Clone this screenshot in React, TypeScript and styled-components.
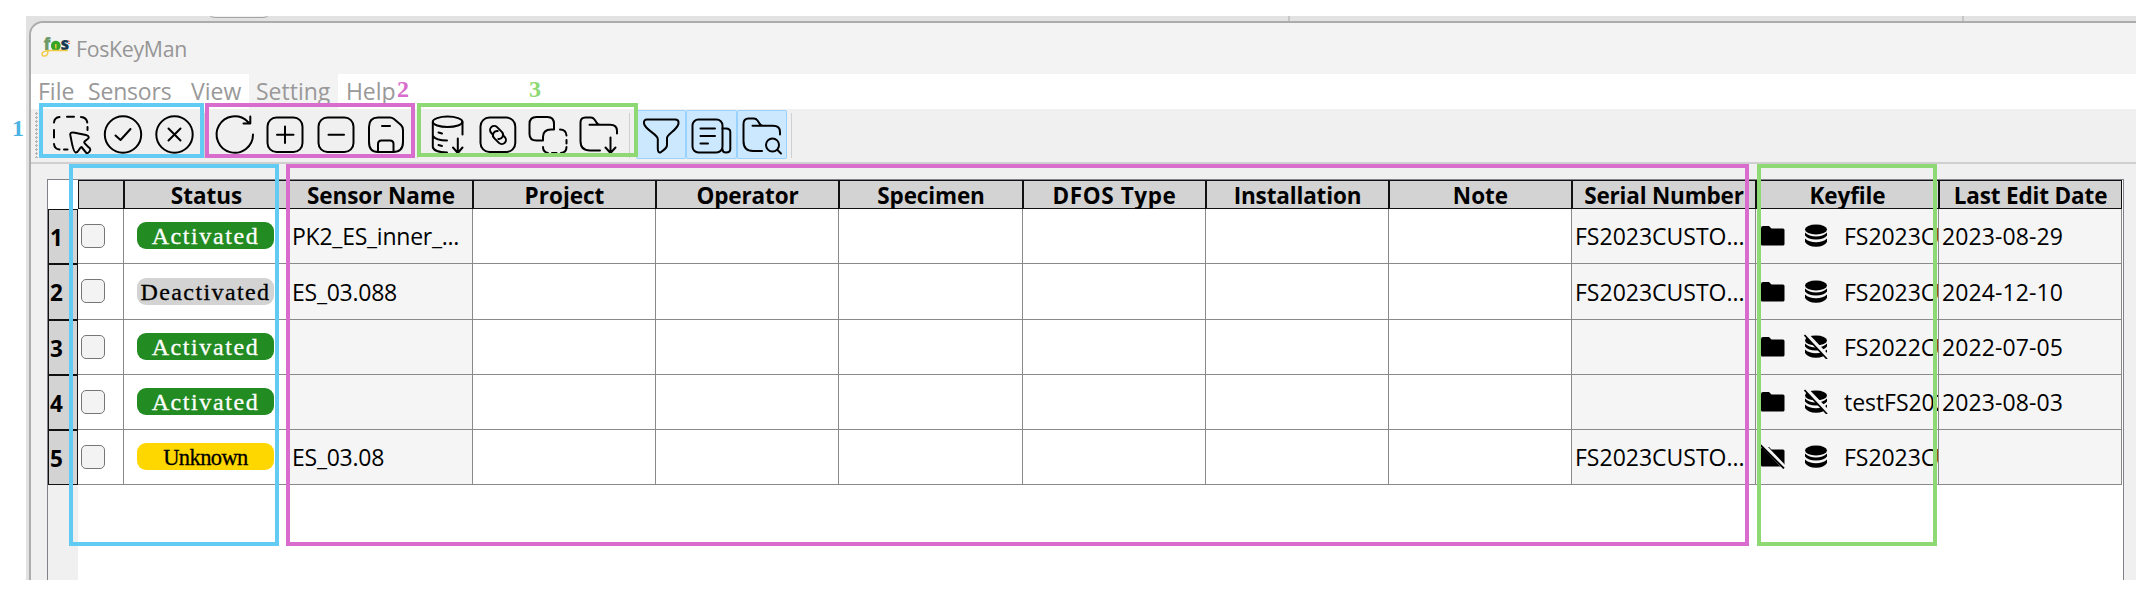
import React from "react";
import styled, { createGlobalStyle, css } from "styled-components";

const UI_FONT = '"Open Sans", "Noto Sans", sans-serif';

const GlobalStyle = createGlobalStyle`
  * { box-sizing: border-box; }
  body { margin: 0; background: #fff; font-family: ${UI_FONT}; }
`;

const Stage = styled.div`
  position: relative;
  width: 2156px;
  height: 598px;
  padding: 16px 20px 18px 26px;
  background: #fff;
  overflow: hidden;
`;

const Desktop = styled.div`
  position: relative;
  height: 564px;
  padding: 5px 0 0 3px;
  background: #e2e2e2;
  overflow: hidden;
`;

const BackdropTick = styled.i<{ $x: number }>`
  position: absolute;
  top: 0;
  left: ${(p) => p.$x}px;
  width: 2px;
  height: 6px;
  background: #c6c6c6;
`;

const BackdropPill = styled.i`
  position: absolute;
  top: -16px;
  left: 180px;
  width: 66px;
  height: 18px;
  border: 1px solid #a5a5a5;
  border-radius: 10px;
  background: #f0f0f0;
`;

const Window = styled.div`
  position: relative;
  display: flex;
  flex-direction: column;
  height: 559px;
  border: solid #acacac;
  border-width: 2px 0 0 2px;
  border-top-left-radius: 14px;
  background: #f0f0f0;
  overflow: hidden;
  > * { flex-shrink: 0; }
`;

const TitleBar = styled.header`
  display: flex;
  align-items: center;
  height: 51px;
  padding: 0 0 1px 10px;
  background: #f3f3f3;
`;

const AppTitle = styled.span`
  margin-left: 5px;
  padding-top: 1px;
  font-size: 21.3px;
  line-height: 30px;
  letter-spacing: -0.3px;
  color: #969696;
`;

const MenuBar = styled.nav`
  display: flex;
  height: 35px;
  background: #fff;
`;

const MenuItem = styled.span<{ $w: number; $pad: number; $ls?: number; $hot?: boolean }>`
  width: ${(p) => p.$w}px;
  padding-left: ${(p) => p.$pad}px;
  font-size: 23px;
  line-height: 34px;
  letter-spacing: ${(p) => p.$ls ?? 0}px;
  white-space: nowrap;
  color: #999;
  background: ${(p) => (p.$hot ? "#f3f3f3" : "transparent")};
`;

const ToolBar = styled.div`
  display: flex;
  align-items: flex-start;
  height: 55px;
  padding: 1px 0 0 4px;
  border-bottom: 2px solid #cfcfcf;
`;

const Grip = styled.div`
  width: 3px;
  height: 46px;
  margin: 2px 9px 0 0;
  background: radial-gradient(circle at 1.5px 1.5px, #b5b5b5 1.2px, transparent 1.4px) 0 0 / 3px 4px;
`;

const ToolGroup = styled.div<{ $pitch: number }>`
  display: flex;
  > * { width: ${(p) => p.$pitch}px; }
`;

const ToolButton = styled.button<{ $on?: boolean }>`
  display: block;
  height: 49px;
  padding: 0;
  border: 0;
  background: none;
  ${(p) =>
    p.$on &&
    css`
      background: #cce8ff;
      box-shadow: inset 0 0 0 1px #99d1ff;
      border-radius: 2px;
    `}
  svg { display: block; }
`;

const ToolSeparator = styled.i<{ $l: number; $r: number }>`
  width: 1px;
  height: 45px;
  margin: 3px ${(p) => p.$r}px 0 ${(p) => p.$l}px;
  background: #d0d0d0;
`;

const Content = styled.main`
  flex: 1;
  padding: 15px 12px 0 16px;
`;

const TableFrame = styled.section`
  display: flex;
  flex-direction: column;
  height: 401px;
  border: solid #80838a;
  border-width: 1px 1px 0 1px;
  background: #fff;
`;

const COLUMNS = "30px 46px 165px 184px 183px 183px 184px 183px 183px 183px 184px 183px 183px";

const Grid = styled.div`
  display: grid;
  grid-template-columns: ${COLUMNS};
  grid-template-rows: 29px 55px 56px 55px 55px 55px;
`;

const Corner = styled.div`
  background: #fff;
`;

const HeadCell = styled.div<{ $ls?: number }>`
  display: flex;
  justify-content: center;
  border: 1px solid #111;
  background: #d3d3d3;
  font-size: 22.5px;
  font-weight: 700;
  line-height: 29px;
  letter-spacing: ${(p) => p.$ls ?? 0}px;
  white-space: nowrap;
  color: #000;
`;

const RowHead = styled.div`
  display: flex;
  align-items: center;
  padding: 1px 0 0 1px;
  border: 1px solid #111;
  background: #d3d3d3;
  font-size: 22.5px;
  font-weight: 700;
`;

const Cell = styled.div<{ $locked?: boolean; $pad?: number }>`
  display: flex;
  align-items: center;
  min-width: 0;
  padding: 0 0 0 ${(p) => p.$pad ?? 3}px;
  border: solid #8a8a8a;
  border-width: 0 1px 1px 0;
  background: ${(p) => (p.$locked ? "#f5f5f5" : "#fff")};
  font-size: 23px;
  line-height: 32px;
  white-space: nowrap;
  color: #000;
  overflow: hidden;
`;

const CellText = styled.span<{ $ls?: number }>`
  letter-spacing: ${(p) => p.$ls ?? 0}px;
`;

const CheckBox = styled.i`
  width: 24px;
  height: 24px;
  margin-top: -1px;
  border: 1.5px solid #767676;
  border-radius: 5px;
  background: #f3f3f3;
`;

const TONES = {
  Activated: { bg: "#228b22", fg: "#fff", ls: 1.6, size: 24 },
  Deactivated: { bg: "#d3d3d3", fg: "#000", ls: 1.4, size: 24 },
  Unknown: { bg: "#ffd700", fg: "#000", ls: -0.6, size: 22.5 },
};
type Status = keyof typeof TONES;

const Badge = styled.span<{ $s: Status }>`
  width: 137px;
  height: 27px;
  margin-top: -1px;
  border-radius: 9px;
  background: ${(p) => TONES[p.$s].bg};
  color: ${(p) => TONES[p.$s].fg};
  font-family: "Liberation Serif", serif;
  font-size: ${(p) => TONES[p.$s].size}px;
  line-height: 29px;
  letter-spacing: ${(p) => TONES[p.$s].ls}px;
  text-align: center;
  -webkit-text-stroke: 0.3px currentColor;
`;

const KeyIcons = styled.span`
  display: flex;
  gap: 19px;
  width: 84px;
  flex: none;
  margin-top: -1px;
`;

const HeaderGutter = styled.div`
  flex: 1;
  width: 30px;
  background: #f0f0f0;
`;

const Callout = styled.div<{ $x: number; $y: number; $w: number; $h: number; $c: string }>`
  position: absolute;
  left: ${(p) => p.$x}px;
  top: ${(p) => p.$y}px;
  width: ${(p) => p.$w}px;
  height: ${(p) => p.$h}px;
  border: 4px solid ${(p) => p.$c};
`;

const CalloutNumber = styled.b<{ $x: number; $y: number; $c: string }>`
  position: absolute;
  left: ${(p) => p.$x}px;
  top: ${(p) => p.$y}px;
  font: 700 24px/24px "Liberation Serif", serif;
  color: ${(p) => p.$c};
`;

const LogoSvg = styled.svg`
  display: block;
  overflow: visible;
`;

const Logo = () => (
  <LogoSvg width="30" height="24" viewBox="0 0 30 24">
    <g fontFamily="Open Sans, sans-serif" fontWeight="800" fontSize="17">
      <text x="2.5" y="14" fill="#6d9a68">f</text>
      <text x="19.5" y="14" fill="#173a52">s</text>
    </g>
    <circle cx="14.8" cy="9.7" r="4.900" fill="#36a32b" />
    <path d="M14.800 8v4.500" stroke="#e5c530" strokeWidth="1.600" />
    <path d="M26.500 4.500l2.300 1M27 7.500h2" stroke="#df6b52" strokeWidth="1" />
    <path d="M27 14.500H9.500C4 14.500 1 16 1 18.300s4.500 2.400 5.500-.4L7.200 14" fill="none" stroke="#f2cb45" strokeWidth="1.500" />
  </LogoSvg>
);

const Glyph = ({ children }: { children: React.ReactNode }) => (
  <svg width="50" height="49" viewBox="0 0 50 49" fill="none" stroke="#000" strokeWidth="2" strokeLinecap="round" strokeLinejoin="round">
    {children}
  </svg>
);

const icons = {
  select: (
    <>
      <path d="M7 12.5Q7.5 7.5 12.500 7M20 6.700H27M34 7Q39.500 7.500 40.300 12.500M40.500 17V20M7 20V27.500M7 34Q7.500 39 12.500 39.500M17 39.600H20.500" />
      <path d="M23.500 26C22.500 23.500 24 22 26.500 22.600L39 25C42.500 26 42.500 28 40 29.500L37.500 31.500C36.500 33 38 34 43 38.500C44 40 42 43.500 39.500 43.200L34.500 37C32.500 37 31.500 43 28.500 42.500C26 42 24.500 31 23.500 26Z" />
    </>
  ),
  check: (
    <>
      <circle cx="25" cy="24.500" r="18.200" />
      <path d="M17.500 25.500L22.500 30L32.500 19" />
    </>
  ),
  cross: (
    <>
      <circle cx="25.500" cy="24.500" r="18.200" />
      <path d="M19.500 18.500L31.500 30.500M31.500 18.500L19.500 30.500" />
    </>
  ),
  refresh: <path d="M43 24.500A18.200 18.200 0 1 1 37.500 11.500L40 13.500M40.300 6.500V13.600H33.500" />,
  plus: (
    <>
      <rect x="7.500" y="7.500" width="35" height="34.500" rx="9" />
      <path d="M25 16.500V33M17 24.700H33.500" />
    </>
  ),
  minus: (
    <>
      <rect x="7.500" y="7.500" width="35" height="34.500" rx="9" />
      <path d="M17.500 24.700H33" />
    </>
  ),
  save: (
    <>
      <path d="M17 7.500H29Q31 7.500 33 9L40 15Q42 17 42 20V32Q42 42 32 42H17Q8 42 8 32V17Q8 7.500 17 7.500Z" />
      <path d="M21 16H29M17 42V34Q17 30.500 20.500 30.500H29Q32.500 30.500 32.500 34V42" />
    </>
  ),
  dbDown: (
    <>
      <ellipse cx="24.600" cy="11.800" rx="14.800" ry="5.200" />
      <path d="M9.800 12V37Q10.500 42 24 42.500M39.500 12V24.500M10 26Q13 30.500 24 30.500M15.500 22.500L19 23.500M15.500 35L19 36M34.800 28.500V43M30 37.500L34.800 43L39.500 37.500" />
    </>
  ),
  link: (
    <>
      <rect x="7.500" y="7.500" width="34.800" height="34.500" rx="9" />
      <g transform="rotate(45 25 25)">
        <path d="M21 28.300H18.800A4.100 4.100 0 0 1 18.800 20.100H25.500A4.100 4.100 0 0 1 28 27.500" />
        <path d="M29 21.700H31.200A4.100 4.100 0 0 1 31.200 29.900H24.500A4.100 4.100 0 0 1 22 22.500" />
      </g>
    </>
  ),
  combine: (
    <>
      <path d="M13.500 7H24.500Q31 7 31 14V19.500H28Q20 19.500 20 27V30.500H13.500Q6.500 30.500 6.500 24V14Q6.500 7 13.500 7Z" />
      <path d="M37 19.500Q43 19.500 43.500 25.500M43.500 30V33.500M43.500 37Q43.500 42.500 38 43M20 37Q20 42 25 43M29 43H33.500" />
    </>
  ),
  folderDown: (
    <>
      <path d="M26 40.500H16Q6.500 40.500 6.500 31V12.500Q6.500 7.500 11.500 7.500H17Q19 7.500 20.500 9.500L22.500 12.500Q23.500 14.800 26 14.800H36Q43 14.800 43 21V23.500M15.500 14.800H24M36.500 27.500V43M31.500 37.500L36.500 43L41.500 37.500" />
    </>
  ),
  filter: <path d="M11 9.500H39Q43 9.500 42.500 13.500C41.500 20 31 24 31 28V35C31 39 28 39.500 24.500 42.500Q22 43 21.800 39V29C21.800 24 9 20 8 13.500Q7.500 9.500 11 9.500Z" />,
  news: (
    <>
      <rect x="6.500" y="9.500" width="30" height="33" rx="6" />
      <path d="M36.500 18.500H40Q44.300 18.500 44.300 22V39Q44.300 42.500 40 42.500Q36.500 42.500 36.500 39M14.500 18.500H29M14.500 26H29M14.500 33.500H22" />
    </>
  ),
  folderSearch: (
    <>
      <path d="M25 41H16Q6.500 41 6.500 31V14Q6.500 8.500 11.500 8.500H17Q19 8.500 20.500 10.500L22.500 13.500Q23.500 15.800 26 15.800H36Q43 15.800 43 22V24.500M15.500 15.800H24" />
      <circle cx="35.500" cy="35" r="6.500" />
      <path d="M40.500 40L44 43.500" />
    </>
  ),
};
type IconName = keyof typeof icons;

const FolderIcon = ({ off }: { off?: boolean }) => (
  <svg width="25" height="25" viewBox="0 0 25 25">
    <path d="M1 5Q1 3 3 3H9L11.500 5.500H23Q24.500 5.500 24.500 7V21Q24.500 22.500 23 22.500H2Q1 22.500 1 21Z" />
    {off && (
      <>
        <path d="M2 0L25 24" stroke="#f5f5f5" strokeWidth="4.500" />
        <path d="M0 0.500L24 24.500" stroke="#000" strokeWidth="1.800" />
      </>
    )}
  </svg>
);

const DatabaseIcon = ({ off }: { off?: boolean }) => (
  <svg width="24" height="25" viewBox="0 0 24 25">
    <ellipse cx="12" cy="6.500" rx="11" ry="5" />
    <path d="M1 9.500Q5 13.500 12 13.500T23 9.500V12.500Q20 16.500 12 16.500T1 12.500Z" />
    <path d="M1 15.500Q5 19.300 12 19.300T23 15.500V19Q20 23.700 12 23.700T1 19Z" />
    {off && (
      <>
        <path d="M2 0L25 24" stroke="#f5f5f5" strokeWidth="4" />
        <path d="M0.500 1L23 25" stroke="#000" strokeWidth="1.700" />
      </>
    )}
  </svg>
);

const Tools = ({ names, pitch, on }: { names: IconName[]; pitch: number; on?: boolean }) => (
  <ToolGroup $pitch={pitch}>
    {names.map((n) => (
      <ToolButton key={n} $on={on} aria-label={n}>
        <Glyph>{icons[n]}</Glyph>
      </ToolButton>
    ))}
  </ToolGroup>
);

const heads: [string, number][] = [
  ["", 0],
  ["Status", 0],
  ["Sensor Name", -0.1],
  ["Project", 0],
  ["Operator", -0.15],
  ["Specimen", -0.15],
  ["DFOS Type", 0.6],
  ["Installation", -0.15],
  ["Note", 0],
  ["Serial Number", -0.2],
  ["Keyfile", -0.1],
  ["Last Edit Date", -0.15],
];

const rows: { status: Status; name: string; serial: string; folder: boolean; db: boolean; key: string; date: string }[] = [
  { status: "Activated", name: "PK2_ES_inner_...", serial: "FS2023CUSTO...", folder: true, db: true, key: "FS2023CU", date: "2023-08-29" },
  { status: "Deactivated", name: "ES_03.088", serial: "FS2023CUSTO...", folder: true, db: true, key: "FS2023CU", date: "2024-12-10" },
  { status: "Activated", name: "", serial: "", folder: true, db: false, key: "FS2022CU", date: "2022-07-05" },
  { status: "Activated", name: "", serial: "", folder: true, db: false, key: "testFS202", date: "2023-08-03" },
  { status: "Unknown", name: "ES_03.08", serial: "FS2023CUSTO...", folder: false, db: true, key: "FS2023CU", date: "" },
];

const BLUE = "#62cbf3";
const PINK = "#d86dcd";
const GREEN = "#8ed973";

export default function App() {
  return (
    <Stage>
      <GlobalStyle />
      <Desktop>
        <BackdropPill />
        <BackdropTick $x={1262} />
        <BackdropTick $x={1936} />
        <Window>
          <TitleBar>
            <Logo />
            <AppTitle>FosKeyMan</AppTitle>
          </TitleBar>
          <MenuBar>
            <MenuItem $w={48} $pad={7}>File</MenuItem>
            <MenuItem $w={104} $pad={9} $ls={-0.2}>Sensors</MenuItem>
            <MenuItem $w={66} $pad={8}>View</MenuItem>
            <MenuItem $w={89} $pad={7} $hot>Setting</MenuItem>
            <MenuItem $w={70} $pad={8} $ls={-0.1}>Help</MenuItem>
          </MenuBar>
          <ToolBar>
            <Grip />
            <Tools names={["select", "check", "cross"]} pitch={51} />
            <ToolSeparator $l={4} $r={5} />
            <Tools names={["refresh", "plus", "minus", "save"]} pitch={50.4} />
            <ToolSeparator $l={5} $r={5} />
            <Tools names={["dbDown", "link", "combine", "folderDown"]} pitch={50.4} />
            <ToolSeparator $l={5} $r={6} />
            <Tools names={["filter", "news", "folderSearch"]} pitch={50.3} on />
            <ToolSeparator $l={4} $r={0} />
          </ToolBar>
          <Content>
            <TableFrame>
              <Grid>
                <Corner />
                {heads.map(([label, ls], i) => (
                  <HeadCell key={i} $ls={ls}>{label}</HeadCell>
                ))}
                {rows.map((r, i) => (
                  <React.Fragment key={i}>
                    <RowHead>{i + 1}</RowHead>
                    <Cell><CheckBox /></Cell>
                    <Cell $pad={13}><Badge $s={r.status}>{r.status}</Badge></Cell>
                    <Cell $locked $pad={3}><CellText $ls={-0.25}>{r.name}</CellText></Cell>
                    {[0, 1, 2, 3, 4, 5].map((c) => <Cell key={c} />)}
                    <Cell $locked><CellText>{r.serial}</CellText></Cell>
                    <Cell $locked $pad={4}>
                      <KeyIcons>
                        <FolderIcon off={!r.folder} />
                        <DatabaseIcon off={!r.db} />
                      </KeyIcons>
                      <CellText $ls={-0.05}>{r.key}</CellText>
                    </Cell>
                    <Cell $locked><CellText $ls={0.1}>{r.date}</CellText></Cell>
                  </React.Fragment>
                ))}
              </Grid>
              <HeaderGutter />
            </TableFrame>
          </Content>
        </Window>
      </Desktop>
      <Callout $x={39} $y={103} $w={165} $h={55} $c={BLUE} />
      <Callout $x={205} $y={103} $w={210} $h={55} $c={PINK} />
      <Callout $x={417} $y={103} $w={221} $h={54} $c={GREEN} />
      <Callout $x={69} $y={164} $w={210} $h={382} $c={BLUE} />
      <Callout $x={286} $y={164} $w={1463} $h={382} $c={PINK} />
      <Callout $x={1757} $y={164} $w={180} $h={382} $c={GREEN} />
      <CalloutNumber $x={12} $y={116} $c="#4bb4e4">1</CalloutNumber>
      <CalloutNumber $x={397} $y={77} $c={PINK}>2</CalloutNumber>
      <CalloutNumber $x={529} $y={77} $c={GREEN}>3</CalloutNumber>
    </Stage>
  );
}
